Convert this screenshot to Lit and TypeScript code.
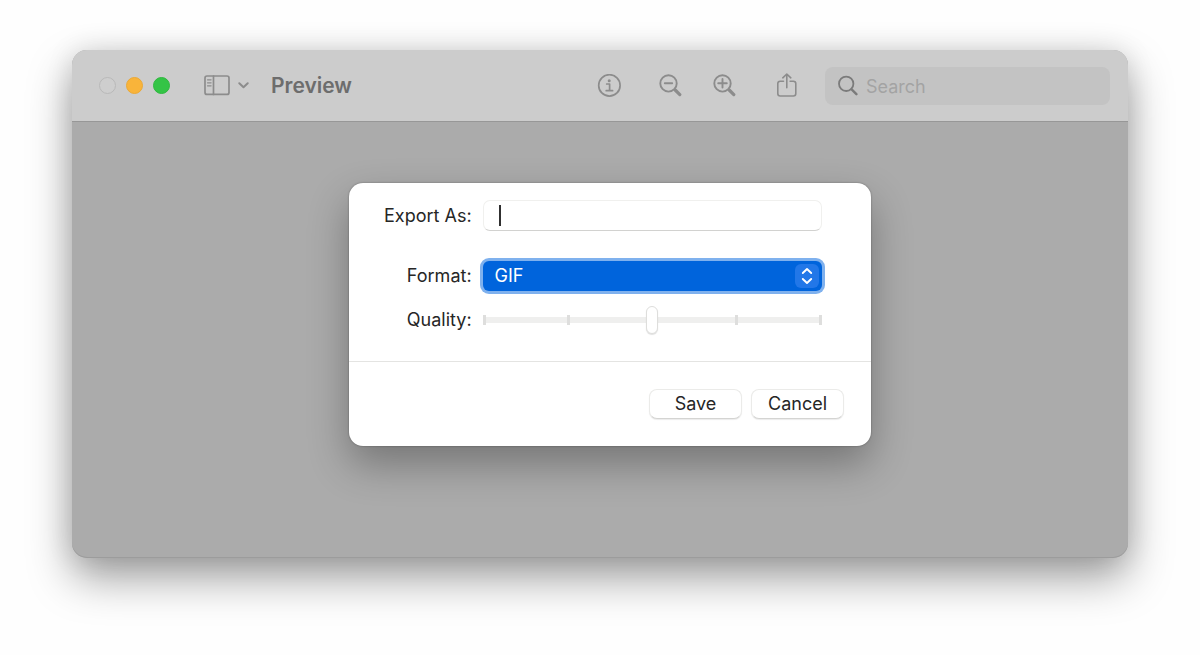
import { LitElement, html, css, svg } from "lit";
import { customElement, state } from "lit/decorators.js";

const icons = {
  sidebar: svg`<rect x="1" y="1" width="24" height="18.4" rx="2"/><path d="M9.5 1v18.4"/><path stroke-width="1.2" d="M3.5 4.8h3.6M3.5 7.8h3.6M3.5 10.8h3.6"/>`,
  info: svg`<circle cx="12.4" cy="11.4" r="10.7"/><circle cx="12.2" cy="6.7" r="1.5" fill="currentColor" stroke="none"/><path d="M9.7 10h2.9v6.6M9.2 16.7h6.4"/>`,
  zoomOut: svg`<circle cx="10.5" cy="9.4" r="8.2"/><path d="M6.8 9.3h7.4"/><path stroke-width="3.2" d="M17.2 16l4.6 4.6"/>`,
  zoomIn: svg`<circle cx="10.5" cy="9.4" r="8.2"/><path d="M6.2 9.3h8.6M10.5 5v8.6"/><path stroke-width="3.2" d="M17.2 16l4.6 4.6"/>`,
  share: svg`<path d="M7.5 8.2H4.2Q1.8 8.2 1.8 10.6v10q0 2.4 2.4 2.4h13.2q2.4 0 2.4-2.4v-10q0-2.4-2.4-2.4h-3.3"/><path d="M10.8 14.8V1M6.8 4.8l4-3.8 4 3.8"/>`,
};

@customElement("app-root")
export class AppRoot extends LitElement {
  static styles = css`
    :host {
      display: flex;
      min-height: 100vh;
      box-sizing: border-box;
      padding: 50px 72px 97px;
      background: #fefefe;
      font-family: Inter, "Liberation Sans", sans-serif;
      font-size: 18px;
      line-height: 24px;
      color: #262626;
    }
    * { box-sizing: border-box; }
    button, input, select { font: inherit; color: inherit; margin: 0; }
    svg { display: block; fill: none; stroke: currentColor; stroke-linecap: round; stroke-linejoin: round; }
    .window {
      flex: 1;
      display: flex;
      flex-direction: column;
      border-radius: 15px;
      background: #ababab;
      box-shadow: inset 0 -1px 0 #9c9c9c, 0 20px 44px #00000060, 0 0 28px #0000001c;
    }
    .toolbar {
      display: flex;
      align-items: center;
      height: 72px;
      padding: 0 18px 0 27px;
      border-bottom: 1px solid #979797;
      border-radius: 15px 15px 0 0;
      background: #cccccc;
      color: #8c8c8c;
    }
    .lights { display: flex; gap: 10px; }
    .light { width: 17px; height: 17px; padding: 0; border: 1px solid #b9b9b9; border-radius: 50%; background: #cecece; }
    .minimise { border-color: #eba936; background: #f9b43a; }
    .maximise { border-color: #2fb83f; background: #34c446; }
    .tool { display: block; padding: 0; border: 0; background: none; }
    .view { display: flex; align-items: center; gap: 8px; margin-left: 34px; }
    .title { margin: 0 0 0 22px; font-size: 21px; line-height: 24px; font-weight: 600; color: #6d6d6d; }
    .tools { display: flex; align-items: center; margin-left: auto; }
    .info { margin-right: 37px; }
    .zoom { margin-right: 30px; }
    .zoom + .share { margin: 0 27px 0 10px; }
    .search {
      display: flex;
      align-items: center;
      gap: 8px;
      flex: 0 1 285px;
      min-width: 0;
      height: 38px;
      padding: 0 12px 0 13px;
      border-radius: 8px;
      background: #c3c3c3;
      color: #7b7b7b;
    }
    .search-input { flex: 1; min-width: 0; padding: 3px 0 0; border: 0; outline: 0; background: none; }
    .search-input::placeholder { color: #a3a3a3; opacity: 1; }
    .canvas { flex: 1; padding: 61px 24px 24px 44px; }
    .dialog {
      width: 100%;
      max-width: 522px;
      margin: 0 auto;
      border-radius: 14px;
      background: #fff;
      box-shadow: 0 0 2px #00000060, 0 18px 40px #00000050;
    }
    .fields {
      display: grid;
      grid-template-columns: auto 1fr;
      align-items: center;
      column-gap: 11px;
      padding: 17px 49px 27px 35px;
      border-bottom: 1px solid #e4e4e2;
    }
    .label { text-align: right; white-space: nowrap; }
    .name {
      width: 100%;
      height: 31px;
      margin-bottom: 30px;
      padding: 0 16px;
      border: 1px solid #f0f0ee;
      border-bottom-color: #d2d2d0;
      border-radius: 7px;
      outline: 0;
      background: linear-gradient(#303030, #303030) 15px 4px / 2px 21px no-repeat #fff;
      caret-color: transparent;
    }
    .name:not(:placeholder-shown) { background-image: none; caret-color: #303030; }
    .name-label { margin-bottom: 30px; }
    .picker {
      display: grid;
      align-items: center;
      border-radius: 6px;
      background: #0064dc;
      box-shadow: 0 0 0 3px #7fb1ee;
      color: #fff;
    }
    .picker > * { grid-area: 1 / 1; }
    .format { width: 100%; height: 30px; padding: 0 36px 0 12px; border: 0; outline: 0; background: none; appearance: none; }
    .format option { color: #262626; }
    .stepper { justify-self: end; margin-right: 3px; border-radius: 6px; background: #2277e8; pointer-events: none; }
    .quality {
      width: 100%;
      height: 28px;
      appearance: none;
      background:
        linear-gradient(#dededd, #dededd) 0 50% / 3px 10px no-repeat,
        linear-gradient(#dededd, #dededd) 25% 50% / 3px 10px no-repeat,
        linear-gradient(#dededd, #dededd) 75% 50% / 3px 10px no-repeat,
        linear-gradient(#dededd, #dededd) 100% 50% / 3px 10px no-repeat,
        linear-gradient(#efefee, #efefee) 0 50% / 100% 6px no-repeat;
      outline: 0;
    }
    .quality, .quality-label { margin-top: 15px; }
    .quality::-webkit-slider-thumb {
      appearance: none;
      width: 12px;
      height: 28px;
      border: 1px solid #dededc;
      border-radius: 6px;
      background: #fff;
      box-shadow: 0 1px 1px #00000020;
    }
    .actions { display: flex; justify-content: flex-end; gap: 9px; padding: 27px 27px 27px; }
    .action {
      width: 93px;
      height: 30px;
      padding: 0;
      border: 1px solid #ebebe9;
      border-bottom-color: #d4d4d2;
      border-radius: 8px;
      background: #fff;
      box-shadow: 0 1px 1px #00000014;
    }
  `;

  @state() private quality = 50;

  render() {
    return html`
      <main class="window">
        <header class="toolbar">
          <div class="lights">
            <button class="light" aria-label="Close"></button>
            <button class="light minimise" aria-label="Minimise"></button>
            <button class="light maximise" aria-label="Zoom window"></button>
          </div>
          <button class="tool view" aria-label="View options">
            <svg width="26" height="21" viewBox="0 0 26 21" stroke-width="1.7">${icons.sidebar}</svg>
            <svg width="11" height="7" viewBox="0 0 11 7" stroke-width="2"><path d="M1.3 1.3l4.2 4 4.2-4"/></svg>
          </button>
          <h1 class="title">Preview</h1>
          <div class="tools">
            <button class="tool info" aria-label="Info"><svg width="24" height="24" viewBox="0 0 24 24" stroke-width="1.7">${icons.info}</svg></button>
            <button class="tool zoom" aria-label="Zoom out"><svg width="24" height="24" viewBox="0 0 24 24" stroke-width="1.9">${icons.zoomOut}</svg></button>
            <button class="tool zoom" aria-label="Zoom in"><svg width="24" height="24" viewBox="0 0 24 24" stroke-width="1.9">${icons.zoomIn}</svg></button>
            <button class="tool share" aria-label="Share"><svg width="22" height="26" viewBox="0 0 22 26" stroke-width="1.6">${icons.share}</svg></button>
          </div>
          <label class="search">
            <svg width="20" height="21" viewBox="0 0 20 21" stroke-width="1.8"><circle cx="8.2" cy="8.8" r="7.2"/><path stroke-width="2.4" d="M13.6 14.4l4.8 4.8"/></svg>
            <input class="search-input" type="text" placeholder="Search" aria-label="Search">
          </label>
        </header>
        <div class="canvas">
          <form class="dialog" role="dialog" aria-label="Export" @submit=${(e: Event) => e.preventDefault()}>
            <div class="fields">
              <label class="label name-label" for="name">Export As:</label>
              <input class="name" id="name" type="text" placeholder=" ">
              <label class="label" for="format">Format:</label>
              <div class="picker">
                <select class="format" id="format"><option>GIF</option><option>JPEG</option><option>PNG</option></select>
                <svg class="stepper" width="24" height="24" viewBox="0 0 24 24" stroke-width="1.9"><path d="M7.8 9l4.2-4 4.2 4M7.8 15l4.2 4 4.2-4"/></svg>
              </div>
              <label class="label quality-label" for="quality">Quality:</label>
              <input class="quality" id="quality" type="range" min="0" max="100" .value=${String(this.quality)}
                @input=${(e: Event) => (this.quality = Number((e.target as HTMLInputElement).value))}>
            </div>
            <div class="actions">
              <button class="action" type="submit">Save</button>
              <button class="action" type="button">Cancel</button>
            </div>
          </form>
        </div>
      </main>
    `;
  }
}
